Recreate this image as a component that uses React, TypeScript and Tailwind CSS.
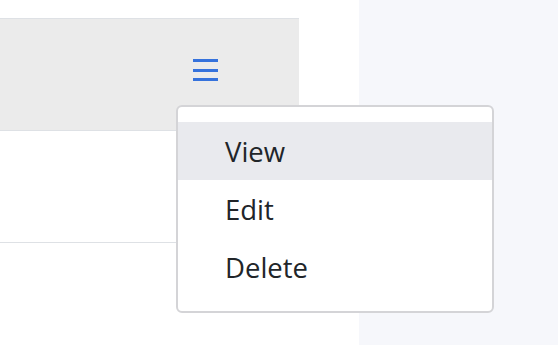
import React from "react";

export default function App() {
  return (
    <div
      className="w-[558px] h-[346px] flex bg-white overflow-hidden"
      style={{ fontFamily: '"Open Sans", "Noto Sans", sans-serif' }}
    >
      <div className="relative w-[359px] h-full bg-white">
        <div className="pt-[18px] w-[299px]">
          <div className="h-[113px] bg-[#ebebeb] border-y border-[#dee1e5] flex items-start justify-end pr-[81px] pt-[40px]">
            <button className="w-[25px] h-[22px] flex flex-col justify-between">
              <span className="block h-[3px] w-full bg-[#3572dc]" />
              <span className="block h-[3px] w-full bg-[#3572dc]" />
              <span className="block h-[3px] w-full bg-[#3572dc]" />
            </button>
          </div>
          <div className="h-[112px] border-b border-[#dee1e5]" />
        </div>

        <div className="absolute left-[176px] top-[105px] w-[318px] bg-white border-2 border-[#d4d4d7] rounded-[6px] py-[15px] z-10">
          {["View", "Edit", "Delete"].map((t, i) => (
            <div
              key={t}
              className={
                "h-[58px] flex items-center pl-[47px] pt-[2px] text-[27.5px] leading-none text-[#212529] " +
                (i === 0 ? "bg-[#e9eaee]" : "")
              }
            >
              {t}
            </div>
          ))}
        </div>
      </div>
      <div className="flex-1 h-[345px] bg-[#f6f7fb]" />
    </div>
  );
}
